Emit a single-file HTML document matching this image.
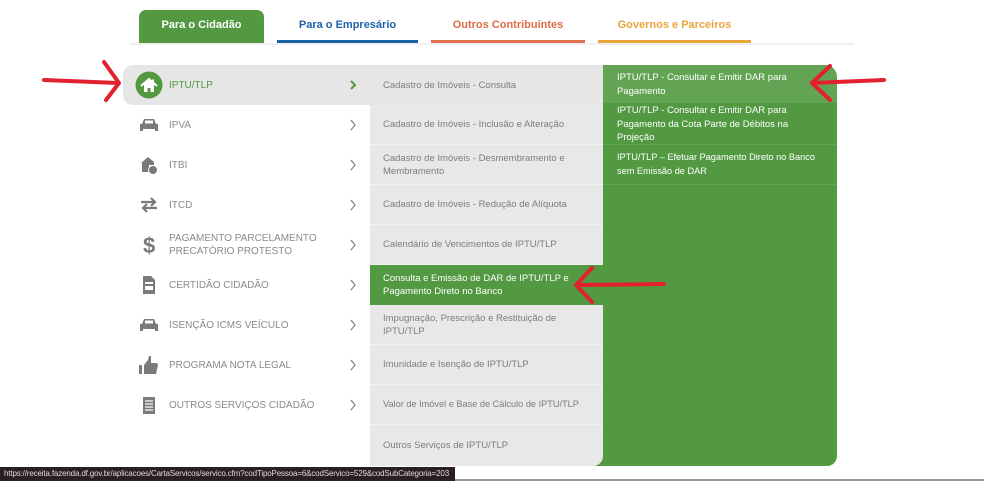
<!DOCTYPE html>
<html><head><meta charset="utf-8"><style>
*{margin:0;padding:0;box-sizing:border-box}
body{width:984px;height:481px;overflow:hidden;background:#fff;font-family:"Liberation Sans",sans-serif;position:relative}
.a{position:absolute}
.tab{position:absolute;top:10px;height:33px;font-size:11px;font-weight:bold;text-align:center;line-height:31px}
.sep{top:43px;left:130px;width:724px;height:2px;background:#f0f0f0}
.l{position:absolute;left:123px;width:247px;height:40px;font-size:10px;color:#8a8a8a}
.l .t{position:absolute;left:46px;top:0;height:40px;display:flex;align-items:center;line-height:13px}
.l .ch{position:absolute;left:226px;top:13px}
.l svg{position:absolute;left:16px;top:10px}
.m{position:absolute;left:370px;width:233px;height:40px;font-size:9.5px;color:#7d7d7d;padding-left:13px;display:flex;align-items:center;line-height:13px;border-bottom:1px solid #f2f2f2}
.r{position:absolute;left:603px;width:234px;font-size:9.5px;color:#fff;padding-left:14px;line-height:13.5px;border-bottom:1px solid #5fa550}
</style></head><body>
<div class="tab" style="left:139px;width:125px;background:#529941;color:#fff;border-radius:7px 7px 0 0">Para o Cidadão</div>
<div class="tab" style="left:277px;width:141px;color:#1b62a8;border-bottom:3px solid #1b62a8">Para o Empresário</div>
<div class="tab" style="left:431px;width:154px;color:#e06b45;border-bottom:3px solid #e07050">Outros Contribuintes</div>
<div class="tab" style="left:598px;width:153px;color:#eaa43c;border-bottom:3px solid #eaa43c">Governos e Parceiros</div>
<div class="a sep"></div>

<div class="a" style="left:590px;top:65px;width:247px;height:401px;background:#529941;border-radius:0 12px 10px 0"></div>
<div class="a" style="left:370px;top:65px;width:233px;height:401px;background:#e8e8e8;border-radius:0 0 10px 0"></div>
<div class="a" style="left:123px;top:65px;width:480px;height:40px;background:#e6e6e6;border-radius:10px 0 0 10px"></div>

<div class="l" style="top:65px;color:#529941;font-weight:bold"><svg style="left:12px;top:6px" width="28" height="28" viewBox="0 0 28 28"><circle cx="14" cy="14" r="13.5" fill="#529941"/><path d="M6 15 L14 8 L22 15 M18 8.5 V12" stroke="#fff" stroke-width="2" fill="none"/><path d="M9 13 L14 9 L19 13 V21 H15.5 V17 H12.5 V21 H9Z" fill="#fff"/></svg><span class="t" style="font-weight:normal">IPTU/TLP</span><svg class="ch" width="8" height="12" viewBox="0 0 8 12" style="left:226px;top:14px"><path d="M2 2 L6 6 L2 10" stroke="#529941" stroke-width="2" fill="none"/></svg></div>
<div class="l" style="top:105px"><svg width="20" height="20" viewBox="0 0 20 20"><path d="M3 9 L5 4 H15 L17 9 H19 V16 H16 V14 H4 V16 H1 V9Z" fill="#7a7a7a"/><rect x="6" y="5.5" width="8" height="3" fill="#fff"/></svg><span class="t">IPVA</span><svg class="ch" width="8" height="12" viewBox="0 0 8 12" style="left:226px;top:14px"><path d="M2 1 L6 6 L2 11" stroke="#888" stroke-width="1.3" fill="none"/></svg></div>
<div class="l" style="top:145px"><svg width="20" height="20" viewBox="0 0 20 20"><path d="M2 8 L9 2 L15 7 V10 H10 V17 H3 V8Z" fill="#7a7a7a"/><circle cx="14" cy="15" r="4.5" fill="#7a7a7a" stroke="#fff"/></svg><span class="t">ITBI</span><svg class="ch" width="8" height="12" viewBox="0 0 8 12" style="left:226px;top:14px"><path d="M2 1 L6 6 L2 11" stroke="#888" stroke-width="1.3" fill="none"/></svg></div>
<div class="l" style="top:185px"><svg width="20" height="20" viewBox="0 0 20 20"><path d="M2 7 H16 M12 3 L16 7 L12 11 M18 13 H4 M8 9 L4 13 L8 17" stroke="#7a7a7a" stroke-width="2.2" fill="none"/></svg><span class="t">ITCD</span><svg class="ch" width="8" height="12" viewBox="0 0 8 12" style="left:226px;top:14px"><path d="M2 1 L6 6 L2 11" stroke="#888" stroke-width="1.3" fill="none"/></svg></div>
<div class="l" style="top:225px"><svg width="20" height="20" viewBox="0 0 20 20"><text x="4" y="18" font-size="22" font-weight="bold" fill="#7a7a7a" font-family="Liberation Sans">$</text></svg><span class="t">PAGAMENTO PARCELAMENTO<br>PRECATÓRIO PROTESTO</span><svg class="ch" width="8" height="12" viewBox="0 0 8 12" style="left:226px;top:14px"><path d="M2 1 L6 6 L2 11" stroke="#888" stroke-width="1.3" fill="none"/></svg></div>
<div class="l" style="top:265px"><svg width="20" height="20" viewBox="0 0 20 20"><path d="M4 1 H12 L16 5 V19 H4Z" fill="#7a7a7a"/><rect x="6" y="7" width="8" height="2" fill="#fff"/><rect x="6" y="11" width="8" height="4" fill="#fff"/></svg><span class="t">CERTIDÃO CIDADÃO</span><svg class="ch" width="8" height="12" viewBox="0 0 8 12" style="left:226px;top:14px"><path d="M2 1 L6 6 L2 11" stroke="#888" stroke-width="1.3" fill="none"/></svg></div>
<div class="l" style="top:305px"><svg width="20" height="20" viewBox="0 0 20 20"><path d="M3 9 L5 4 H15 L17 9 H19 V16 H16 V14 H4 V16 H1 V9Z" fill="#7a7a7a"/><rect x="6" y="5.5" width="8" height="3" fill="#fff"/></svg><span class="t">ISENÇÃO ICMS VEÍCULO</span><svg class="ch" width="8" height="12" viewBox="0 0 8 12" style="left:226px;top:14px"><path d="M2 1 L6 6 L2 11" stroke="#888" stroke-width="1.3" fill="none"/></svg></div>
<div class="l" style="top:345px"><svg width="20" height="20" viewBox="0 0 20 20"><rect x="0" y="10" width="3" height="9" fill="#7a7a7a"/><path d="M5 10 L9 5 L10 1 H12 V8 H18 L19 10 L17 19 H5Z" fill="#7a7a7a"/></svg><span class="t">PROGRAMA NOTA LEGAL</span><svg class="ch" width="8" height="12" viewBox="0 0 8 12" style="left:226px;top:14px"><path d="M2 1 L6 6 L2 11" stroke="#888" stroke-width="1.3" fill="none"/></svg></div>
<div class="l" style="top:385px"><svg width="20" height="20" viewBox="0 0 20 20"><rect x="4" y="2" width="12" height="17" fill="#7a7a7a"/><path d="M6 6 H14 M6 9 H14 M6 12 H14 M6 15 H14" stroke="#fff" stroke-width="1.2"/></svg><span class="t">OUTROS SERVIÇOS CIDADÃO</span><svg class="ch" width="8" height="12" viewBox="0 0 8 12" style="left:226px;top:14px"><path d="M2 1 L6 6 L2 11" stroke="#888" stroke-width="1.3" fill="none"/></svg></div>

<div class="m" style="top:65px;border:0">Cadastro de Imóveis - Consulta</div>
<div class="m" style="top:105px">Cadastro de Imóveis - Inclusão e Alteração</div>
<div class="m" style="top:145px">Cadastro de Imóveis - Desmembramento e<br>Membramento</div>
<div class="m" style="top:185px">Cadastro de Imóveis - Redução de Alíquota</div>
<div class="m" style="top:225px">Calendário de Vencimentos de IPTU/TLP</div>
<div class="m" style="top:265px;background:#529941;color:#fff;border:0">Consulta e Emissão de DAR de IPTU/TLP e<br>Pagamento Direto no Banco</div>
<div class="m" style="top:305px">Impugnação, Prescrição e Restituição de<br>IPTU/TLP</div>
<div class="m" style="top:345px">Imunidade e Isenção de IPTU/TLP</div>
<div class="m" style="top:385px;font-size:9.2px">Valor de Imóvel e Base de Cálculo de IPTU/TLP</div>
<div class="m" style="top:425px;border:0">Outros Serviços de IPTU/TLP</div>

<div class="r" style="top:65px;height:38px;padding-top:6px;background:#62a453;border-radius:0 12px 0 0">IPTU/TLP - Consultar e Emitir DAR para<br>Pagamento</div>
<div class="r" style="top:103px;height:42px;padding-top:1px">IPTU/TLP - Consultar e Emitir DAR para<br>Pagamento da Cota Parte de Débitos na<br>Projeção</div>
<div class="r" style="top:145px;height:40px;padding-top:6px;font-size:9.2px">IPTU/TLP – Efetuar Pagamento Direto no Banco<br>sem Emissão de DAR</div>

<svg class="a" style="left:0;top:0" width="984" height="481">
<g stroke="#e3202e" stroke-width="4" fill="none" stroke-linecap="round" stroke-linejoin="round">
<path d="M44 80 L118 83 M104 62 L119 83 L106 100"/>
<path d="M664 284 L578 285 M592 268 L576 285 L592 302"/>
<path d="M884 80 L812 83 M830 66 L812 83 L830 100"/>
</g></svg>

<div class="a" style="left:0;top:467px;width:455px;height:14px;background:#2b1f25;color:#ddd;font-size:8px;letter-spacing:-0.15px;line-height:14px;padding-left:4px;white-space:nowrap;overflow:hidden">https://receita.fazenda.df.gov.br/aplicacoes/CartaServicos/servico.cfm?codTipoPessoa=6&amp;codServico=529&amp;codSubCategoria=203</div>
<div class="a" style="left:455px;top:479px;width:529px;height:2px;background:#999"></div>
</body></html>
